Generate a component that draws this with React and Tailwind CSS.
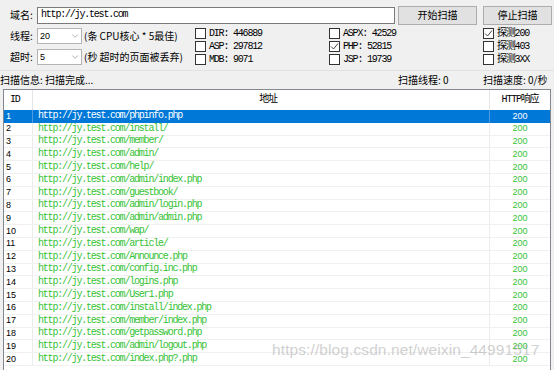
import React from 'react';
import { ChevronDown } from 'lucide-react';

const paths = [
  'phpinfo.php',
  'install/',
  'member/',
  'admin/',
  'help/',
  'admin/index.php',
  'guestbook/',
  'admin/login.php',
  'admin/admin.php',
  'wap/',
  'article/',
  'Announce.php',
  'config.inc.php',
  'logins.php',
  'User1.php',
  'install/index.php',
  'member/index.php',
  'getpassword.php',
  'admin/logout.php',
  'index.php?.php',
];

function CheckBox({ checked, label }) {
  return (
    <div className="flex h-[13px] items-center">
      <span className="flex h-[11px] w-[11px] shrink-0 items-center justify-center border border-[#333333] bg-white">
        {checked && (
          <svg width="9" height="9" viewBox="0 0 9 9">
            <path d="M1 4.5 L3.5 7 L8 1.5" fill="none" stroke="#444" strokeWidth="1" />
          </svg>
        )}
      </span>
      <span className="ml-[3px] font-['Liberation_Mono','Noto_Sans_CJK_SC',monospace] text-[10px] leading-none tracking-[-1.2px] text-black">
        {label}
      </span>
    </div>
  );
}

function Select({ value, label, hint }) {
  return (
    <div className="flex h-[16px] items-center">
      <span className="w-[37px] pl-[10px] text-[10px] leading-none">{label}</span>
      <div className="flex h-[16px] w-[45px] items-center justify-between border border-[#b4b4b4] bg-white pl-[2px] pr-[1px]">
        <span className="font-['Liberation_Sans',sans-serif] text-[9px] leading-none">{value}</span>
        <ChevronDown size={10} strokeWidth={1.1} className="text-[#555]" />
      </div>
      <span className="ml-[2px] text-[10px] leading-none">{hint}</span>
    </div>
  );
}

export default function App() {
  return (
    <div className="relative h-[370px] w-[554px] overflow-hidden bg-[#f0f0f0] font-['Noto_Sans_CJK_SC',sans-serif] text-black">
      <div className="h-[71px] border-b border-[#e2e2e2] pt-[6px]">
        <div className="flex h-[18px] items-center">
          <span className="w-[37px] pl-[10px] text-[10px] leading-none">域名:</span>
          <div className="flex h-[17px] w-[358px] items-center border border-[#7a7a7a] bg-white pl-[3px]">
            <span className="font-['Liberation_Mono',monospace] text-[10px] leading-none tracking-[-1.2px]">http://jy.test.com</span>
          </div>
          <button className="ml-[3px] flex h-[19px] w-[79px] items-center justify-center border border-[#adadad] bg-[#e1e1e1] text-[10px] leading-none">
            开始扫描
          </button>
          <button className="ml-[6px] flex h-[19px] w-[69px] items-center justify-center border border-[#adadad] bg-[#e1e1e1] text-[10px] leading-none">
            停止扫描
          </button>
        </div>
        <div className="mt-[3px] flex">
          <div className="flex w-[195px] flex-col gap-[5px] pt-[1px]">
            <Select label="线程:" value="20" hint="(条 CPU核心 * 5最佳)" />
            <Select label="超时:" value="5" hint="(秒 超时的页面被丢弃)" />
          </div>
          <div className="flex w-[134px] flex-col">
            <CheckBox label="DIR: 446889" />
            <CheckBox label="ASP: 297812" />
            <CheckBox label="MDB: 9071" />
          </div>
          <div className="flex w-[154px] flex-col">
            <CheckBox label="ASPX: 42529" />
            <CheckBox checked label="PHP: 52815" />
            <CheckBox label="JSP: 19739" />
          </div>
          <div className="flex flex-col">
            <CheckBox checked label="探测200" />
            <CheckBox label="探测403" />
            <CheckBox label="探测3XX" />
          </div>
        </div>
      </div>

      <div className="flex h-[18px] items-center text-[10px] leading-none">
        <span className="flex-1">扫描信息: 扫描完成...</span>
        <span className="w-[85px]">扫描线程: 0</span>
        <span className="w-[71px]">扫描速度: 0/秒</span>
      </div>

      <div className="ml-[3px] w-[548px] border border-b-0 border-[#828790] bg-white">
        <div className="flex h-[20px] items-center font-['Liberation_Mono','Noto_Sans_CJK_SC',monospace] text-[10px] leading-none tracking-[-1.2px]">
          <div className="flex h-full w-[29px] items-center border-r border-[#e5e5e5] pl-[6px]">ID</div>
          <div className="flex h-full w-[457px] items-center justify-center border-r border-[#e5e5e5] pl-[14px]">地址</div>
          <div className="flex h-full flex-1 items-center justify-center">HTTP响应</div>
        </div>
        {paths.map((p, i) => {
          const sel = i === 0;
          return (
            <div
              key={p}
              className={
                sel
                  ? 'flex h-[12.8px] items-center bg-[#0078d7] text-white'
                  : 'flex h-[12.8px] items-center border-b border-[#f0f0f0] text-[#36c236]'
              }
            >
              <div
                className={
                  sel
                    ? 'flex h-full w-[29px] items-center border-r border-[#4d9be0] pl-[2px] font-["Liberation_Sans",sans-serif] text-[9px] leading-none'
                    : 'flex h-full w-[29px] items-center border-r border-[#ececec] pl-[2px] font-["Liberation_Sans",sans-serif] text-[9px] leading-none text-black'
                }
              >
                {i + 1}
              </div>
              <div
                className={
                  sel
                    ? 'flex h-full w-[457px] items-center border-r border-[#4d9be0] pl-[5px] font-["Liberation_Mono",monospace] text-[10px] leading-none tracking-[-1.2px]'
                    : 'flex h-full w-[457px] items-center border-r border-[#ececec] pl-[5px] font-["Liberation_Mono",monospace] text-[10px] leading-none tracking-[-1.2px]'
                }
              >
                http://jy.test.com/{p}
              </div>
              <div className="flex h-full flex-1 items-center justify-center font-['Liberation_Sans',sans-serif] text-[9px] leading-none">
                200
              </div>
            </div>
          );
        })}
        <div className="h-[10px]" />
      </div>

      <div className="pointer-events-none absolute left-[272px] top-[342px] font-['Liberation_Sans',sans-serif] text-[15.5px] leading-none tracking-[0.1px] text-[#9a9a9a] opacity-45">
        https://blog.csdn.net/weixin_44991517
      </div>
    </div>
  );
}
